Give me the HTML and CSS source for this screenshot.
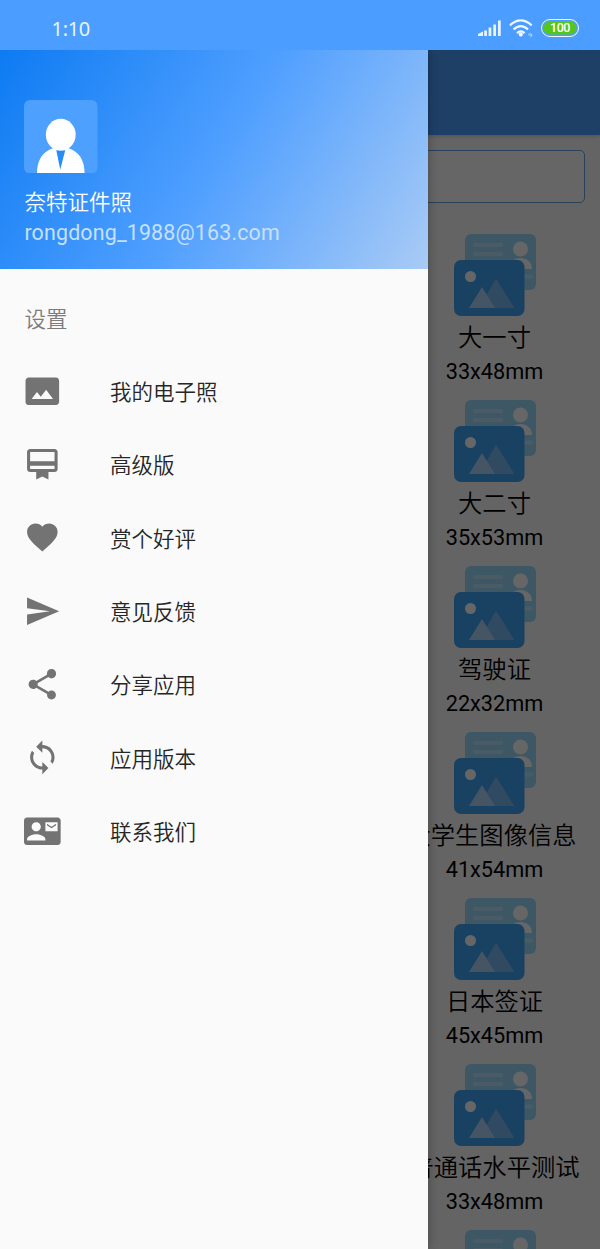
FILE: index.html
```html
<!DOCTYPE html>
<html lang="zh-CN">
<head>
<meta charset="utf-8">
<title>奈特证件照</title>
<link rel="stylesheet" href="styles.css">
</head>
<body>
<svg class="defs" width="0" height="0">
  <defs>
    <symbol id="photos" viewBox="0 0 84 84">
      <rect x="12" y="1" width="71" height="56" rx="6" fill="#98dcfa"/>
      <path d="M22 12h26M22 21h26M72 43.500h6" stroke="#bce4ff" stroke-width="4" stroke-linecap="round"/>
      <circle cx="67.500" cy="16" r="7.500" fill="#fff"/>
      <path d="M56 36c0-7 5-11 11.500-11S79 29 79 36z" fill="#fff"/>
      <rect x="1" y="27" width="70.500" height="56" rx="7" fill="#3ea2f6"/>
      <circle cx="17.500" cy="43.500" r="5.500" fill="#fff"/>
      <path d="M26 75L43 45.500 61.500 75z" fill="#78b8f2"/>
      <path d="M16 75L29 54 42 75z" fill="#acd4fa"/>
    </symbol>
  </defs>
</svg>
<header class="status">
  <span class="clock">1:10</span>
  <div class="indicators">
    <svg class="signal" viewBox="0 0 24 18"><path d="M0 17v-2l5-2.500V17zM6.200 11.500h2.700V17H6.200zM10.600 8.500h2.700V17h-2.700zM15.300 5.500H18V17h-2.700zM20 1.500h2.700V17H20z" fill="#eaf4ff"/></svg>
    <svg class="wifi" viewBox="0 0 24 19"><g fill="none" stroke="#f2f8ff" stroke-width="2.300"><path d="M.900 6.300q10.800-9.800 21.800 0"/><path d="M4.600 10.500q7.200-6.800 14.400 0"/><path d="M8 14.200q3.800-3.600 7.600 0"/></g><circle cx="11.800" cy="15.500" r="2" fill="#fff"/><path d="M19 15.500l1.500-1.500v3zM21.500 13.500v5l2-2z" fill="#b7d8ff"/></svg>
    <span class="battery">100</span>
  </div>
</header>
<main class="screen">
  <section class="page">
    <div class="appbar"></div>
    <div class="search"></div>
    <div class="list">
      <div class="size"><svg><use href="#photos"/></svg><p>大一寸</p><p class="mm">33x48mm</p></div>
      <div class="size"><svg><use href="#photos"/></svg><p>大二寸</p><p class="mm">35x53mm</p></div>
      <div class="size"><svg><use href="#photos"/></svg><p>驾驶证</p><p class="mm">22x32mm</p></div>
      <div class="size"><svg><use href="#photos"/></svg><p class="clipped">大学生图像信息</p><p class="mm">41x54mm</p></div>
      <div class="size"><svg><use href="#photos"/></svg><p>日本签证</p><p class="mm">45x45mm</p></div>
      <div class="size"><svg><use href="#photos"/></svg><p>普通话水平测试</p><p class="mm">33x48mm</p></div>
      <div class="size"><svg><use href="#photos"/></svg></div>
    </div>
  </section>
  <div class="scrim"></div>
  <aside class="drawer">
    <div class="profile">
      <svg class="avatar" viewBox="0 0 74 74"><rect width="74" height="74" rx="6" fill="#4ea0ff"/><path d="M13 74c0-14 6-22 16-25.500h16C55 52 61 60 61 74z" fill="#fff"/><ellipse cx="37" cy="35" rx="15" ry="16" fill="#fff"/><path d="M32.500 50.500q4.500 1 9 0L36.500 70z" fill="#258cf8"/></svg>
      <p class="name">奈特证件照</p>
      <p class="mail">rongdong_1988@163.com</p>
    </div>
    <h2 class="heading">设置</h2>
    <nav class="menu">
      <a><svg viewBox="0 0 24 24"><path d="M21 3H3C2 3 1 4 1 5v14c0 1.100.900 2 2 2h18c1 0 2-1 2-2V5c0-1-1-2-2-2zM5 17l3.500-4.500 2.500 3.010L14.500 11l4.500 6H5z"/></svg><span>我的电子照</span></a>
      <a><svg viewBox="0 0 24 24"><path d="M20 2H4c-1.110 0-2 .890-2 2v11c0 1.110.890 2 2 2h4v5l4-2 4 2v-5h4c1.110 0 2-.890 2-2V4c0-1.110-.890-2-2-2zm0 13H4v-2h16v2zm0-5H4V4h16v6z"/></svg><span>高级版</span></a>
      <a><svg viewBox="0 0 24 24"><path d="M12 21.350l-1.450-1.320C5.400 15.360 2 12.280 2 8.500 2 5.420 4.420 3 7.500 3c1.740 0 3.410.810 4.500 2.090C13.090 3.810 14.760 3 16.500 3 19.580 3 22 5.420 22 8.500c0 3.780-3.400 6.860-8.550 11.540L12 21.350z"/></svg><span>赏个好评</span></a>
      <a><svg viewBox="0 0 24 24"><path d="M2.010 21L23 12 2.010 3 2 10l15 2-15 2z"/></svg><span>意见反馈</span></a>
      <a><svg viewBox="0 0 24 24"><path d="M18 16.080c-.760 0-1.440.300-1.960.770L8.910 12.700c.050-.230.090-.460.090-.700s-.040-.470-.090-.700l7.050-4.110c.540.500 1.250.810 2.040.810 1.660 0 3-1.340 3-3s-1.340-3-3-3-3 1.340-3 3c0 .240.040.470.090.700L8.040 9.810C7.500 9.310 6.790 9 6 9c-1.660 0-3 1.340-3 3s1.340 3 3 3c.790 0 1.500-.310 2.040-.810l7.120 4.160c-.050.210-.080.430-.080.650 0 1.610 1.310 2.920 2.920 2.920s2.920-1.310 2.920-2.920-1.310-2.920-2.920-2.920z"/></svg><span>分享应用</span></a>
      <a><svg viewBox="0 0 24 24"><path d="M12 4V1L8 5l4 4V6c3.310 0 6 2.690 6 6 0 1.010-.250 1.970-.700 2.800l1.460 1.460C19.540 15.030 20 13.570 20 12c0-4.420-3.580-8-8-8zm0 14c-3.310 0-6-2.690-6-6 0-1.010.250-1.970.700-2.800L5.240 7.740C4.460 8.970 4 10.430 4 12c0 4.420 3.580 8 8 8v3l4-4-4-4v3z"/></svg><span>应用版本</span></a>
      <a><svg viewBox="0 0 24 24"><path d="M21 8V7l-3 2-3-2v1l3 2 3-2zm1-5H2C.900 3 0 3.900 0 5v14c0 1.100.900 2 2 2h20c1.100 0 1.990-.900 1.990-2L24 5c0-1.100-.900-2-2-2zM8 6c1.660 0 3 1.340 3 3s-1.340 3-3 3-3-1.340-3-3 1.340-3 3-3zm6 12H2v-1c0-2 4-3.100 6-3.100s6 1.100 6 3.100v1zm8-6h-8V6h8v6z"/></svg><span>联系我们</span></a>
    </nav>
  </aside>
</main>
</body>
</html>
```
FILE: styles.css
```css
* { box-sizing: border-box; }
body { margin: 0; height: 1249px; overflow: hidden; display: flex; flex-direction: column; font-family: Roboto, "Noto Sans CJK SC", sans-serif; }
p, h2 { margin: 0; }
svg { display: block; flex: none; }
.defs { position: absolute; }
.status { height: 49.5px; flex: none; background: #4b9eff; display: flex; justify-content: space-between; padding: 0 21px 0 51.5px; }
.clock { font: 20px/57px "Noto Sans", sans-serif; letter-spacing: -.3px; color: #eaf4ff; }
.indicators { display: flex; align-items: flex-start; padding-top: 19px; }
.signal { width: 24px; height: 18px; margin-right: 7px; }
.wifi { width: 24px; height: 19px; margin-right: 8px; }
.battery { width: 38px; height: 17.5px; border: 1.5px solid #f2f8ff; border-radius: 9px; background: #56c61c; box-shadow: inset 0 0 0 1.5px #4b9eff; color: #fff; font: 500 12.5px/15.5px Roboto, sans-serif; letter-spacing: -.5px; text-align: center; }
.screen { flex: 1; position: relative; overflow: hidden; }
.page { height: 100%; background: #fafafa; }
.appbar { height: 85.5px; background: #4b9fff; box-shadow: 0 1px 4px rgba(0,0,0,.2); }
.search { margin: 15px 15px 0; height: 53px; border: 1px solid #6aa2e4; border-radius: 5px; background: #fff; }
.list { padding: 30px 5.5px 0 394.5px; }
.size { height: 166px; display: flex; flex-direction: column; align-items: center; color: #000; font-size: 24.3px; font-weight: 350; }
.size svg { width: 84px; height: 84px; margin-bottom: 2.5px; }
.size p { line-height: 35px; white-space: nowrap; }
.size .clipped { margin-right: 6px; }
.size .mm { font-size: 21.7px; font-weight: 400; line-height: 33px; }
.scrim { position: absolute; inset: 0; background: rgba(0,0,0,.6); }
.drawer { position: absolute; left: 0; top: 0; bottom: 0; width: 427.5px; background: #fafafa; box-shadow: 0 0 10px rgba(0,0,0,.3); }
.profile { height: 219px; padding: 50px 24.4px 0; background: linear-gradient(122deg, #0d7bf2, #4f9fff 50%, #a9cbf5); }
.avatar { width: 73.5px; height: 73.5px; }
.name { margin-top: 13.5px; font-size: 21.5px; line-height: 32px; color: #fff; font-weight: 350; }
.mail { font-size: 21.4px; line-height: 28px; color: #c6e0ff; letter-spacing: .17px; }
.heading { padding: 35px 0 0 24.5px; font-size: 21.5px; line-height: 32px; font-weight: 350; color: #7c7c7c; }
.menu { padding-top: 19px; }
.menu a { display: flex; align-items: center; gap: 49px; height: 73.33px; padding-left: 24.4px; font-size: 21.5px; font-weight: 350; color: #262626; }
.menu span { padding-bottom: 1px; }
.menu svg { width: 36.67px; height: 36.67px; fill: #737373; }
```
